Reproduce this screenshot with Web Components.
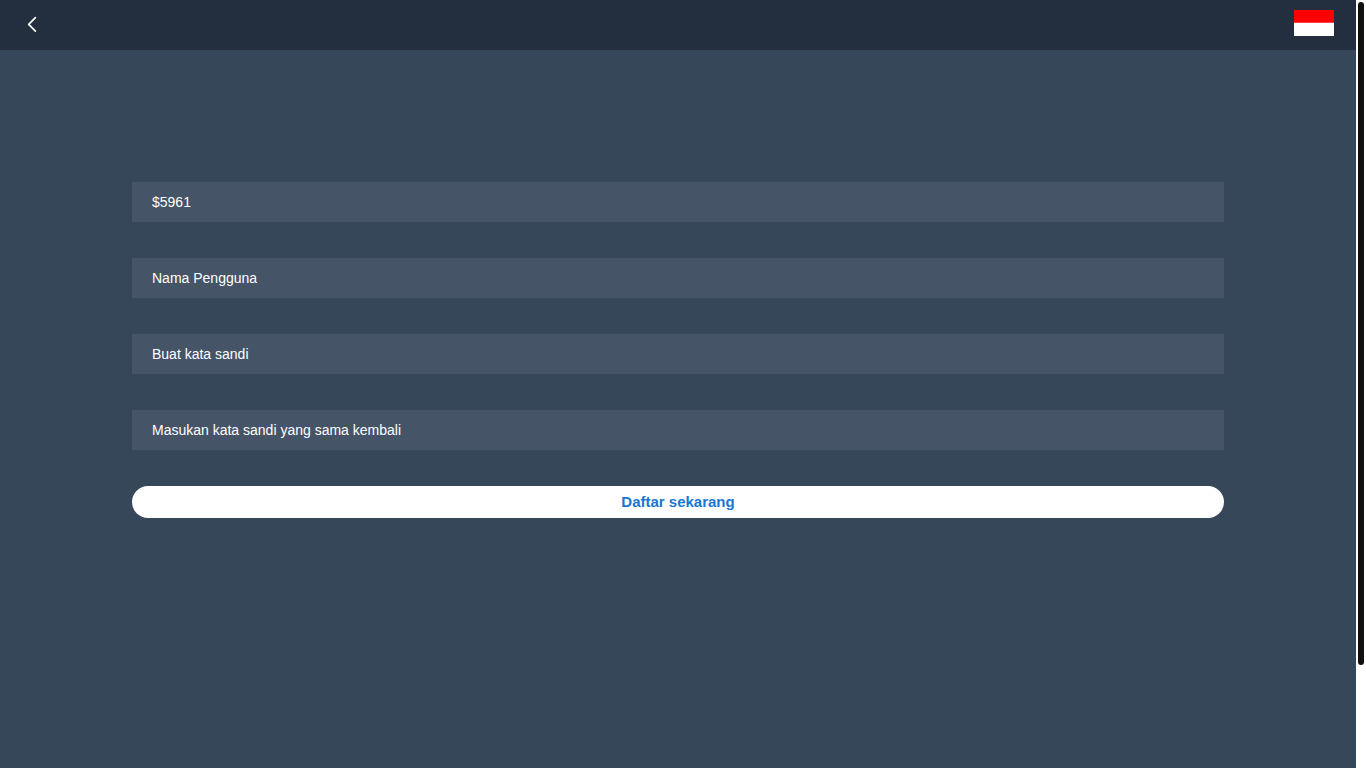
<!DOCTYPE html>
<html lang="id">
<head>
<meta charset="utf-8">
<meta name="viewport" content="width=device-width, initial-scale=1">
<title>Daftar</title>
<style>
  body { margin: 0; font-family: "Liberation Sans", Arial, sans-serif; font-size: 14px; color: #fff; background: #fff; }
</style>
</head>
<body>
<app-frame>
  <top-bar></top-bar>
  <register-form>
    <text-field label="Kode undangan" value="$5961"></text-field>
    <text-field label="Nama Pengguna"></text-field>
    <text-field label="Buat kata sandi" type="password"></text-field>
    <text-field label="Masukan kata sandi yang sama kembali" type="password"></text-field>
    <pill-button slot="action">Daftar sekarang</pill-button>
  </register-form>
</app-frame>

<script>
class BaseElement extends HTMLElement {
  constructor() {
    super();
    this.attachShadow({ mode: "open" });
  }
  render(html) { this.shadowRoot.innerHTML = html; }
}

/* Page area with the slim scroll rail on its right. */
customElements.define("app-frame", class extends BaseElement {
  connectedCallback() {
    this.render(`
      <style>
        :host { display: grid; grid-template-columns: 1fr 10px; min-height: 100vh; }
        .page { display: flex; flex-direction: column; background: #364759; }
        .rail { box-sizing: border-box; height: 100vh; padding: 2px; background: #fff; }
        .thumb { height: calc(86% + 6px); border-radius: 3px; background: #101010; }
      </style>
      <div class="page"><slot></slot></div>
      <div class="rail"><div class="thumb"></div></div>`);
  }
});

customElements.define("top-bar", class extends BaseElement {
  connectedCallback() {
    this.render(`
      <style>
        :host { display: block; }
        header { box-sizing: border-box; height: 50px; display: flex; justify-content: space-between; align-items: center; padding: 0 22px 4px 20px; background: #232f3f; }
        a, button { display: block; padding: 0; border: 0; background: none; cursor: pointer; }
        a { padding-top: 2px; }
        svg { display: block; }
      </style>
      <header>
        <a href="#" aria-label="Kembali">
          <svg width="24" height="24" viewBox="0 0 24 24" fill="none" stroke="#fff" stroke-width="1.700" stroke-linecap="round" stroke-linejoin="round"><path d="M15.400 5.700 8.700 12.400 15.400 19.200"/></svg>
        </a>
        <button type="button" aria-label="Bahasa Indonesia">
          <svg width="40" height="26" viewBox="0 0 40 26"><path fill="#fff" d="M0 0h40v26H0z"/><path fill="#f00" d="M0 0h40v12.700H0z"/></svg>
        </button>
      </header>`);
  }
});

customElements.define("register-form", class extends BaseElement {
  connectedCallback() {
    this.render(`
      <style>
        :host { display: block; box-sizing: border-box; width: 100%; max-width: 1140px; margin: 0 auto; padding: 132px 24px; }
        form { display: flex; flex-direction: column; gap: 36px; }
      </style>
      <form>
        <slot></slot>
        <slot name="action"></slot>
      </form>`);
  }
});

customElements.define("text-field", class extends BaseElement {
  connectedCallback() {
    const label = this.getAttribute("label");
    this.render(`
      <style>
        :host { display: block; }
        input { display: block; box-sizing: border-box; width: 100%; height: 40px; margin: 0; padding: 0 20px; border: 0; border-radius: 0; outline: 0; background: #465467; color: #fff; font: inherit; }
        input::placeholder { color: #fff; opacity: 1; }
      </style>
      <input type="${this.getAttribute("type") || "text"}" aria-label="${label}" placeholder="${label}" value="${this.getAttribute("value") || ""}">`);
  }
});

customElements.define("pill-button", class extends BaseElement {
  connectedCallback() {
    this.render(`
      <style>
        :host { display: block; }
        button { display: block; width: 100%; height: 32px; padding: 0 0 2px; border: 0; border-radius: 16px; background: #fff; color: #1976d2; font-family: inherit; font-size: 15px; font-weight: 700; cursor: pointer; }
      </style>
      <button type="button"><slot></slot></button>`);
  }
});
</script>
</body>
</html>
